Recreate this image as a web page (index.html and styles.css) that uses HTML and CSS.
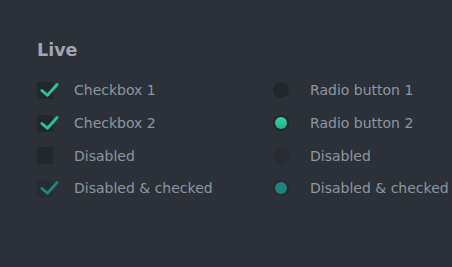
FILE: index.html
```html
<!DOCTYPE html>
<html lang="en">
<head>
  <meta charset="UTF-8">
  <title>Live controls</title>
  <link rel="stylesheet" href="styles.css">
</head>
<body>
  <div class="panel">
    <h2>Live</h2>
    <div class="grid">
      <!-- checkboxes -->
      <div class="col">
        <label class="row">
          <span class="box"><svg viewBox="0 0 24 20"><path d="M3 10 L9.5 15.5 L21 3"/></svg></span>
          Checkbox 1
        </label>
        <label class="row">
          <span class="box"><svg viewBox="0 0 24 20"><path d="M3 10 L9.5 15.5 L21 3"/></svg></span>
          Checkbox 2
        </label>
        <label class="row">
          <span class="box"></span>
          Disabled
        </label>
        <label class="row">
          <span class="box off"><svg viewBox="0 0 24 20"><path d="M3 10 L9.5 15.5 L21 3"/></svg></span>
          Disabled &amp; checked
        </label>
      </div>
      <!-- radios -->
      <div class="col">
        <label class="row">
          <span class="radio"></span>
          Radio button 1
        </label>
        <label class="row">
          <span class="radio"><i class="dot"></i></span>
          Radio button 2
        </label>
        <label class="row">
          <span class="radio off"></span>
          Disabled
        </label>
        <label class="row">
          <span class="radio off"><i class="dot"></i></span>
          Disabled &amp; checked
        </label>
      </div>
    </div>
  </div>
</body>
</html>
```

FILE: styles.css
```css
body { margin:0; background:#2b3039; font-family:'DejaVu Sans', 'Noto Sans', sans-serif; }
.panel { padding:40px 0 0 37px; }
h2 { margin:0 0 13px 0; font-size:17.5px; font-weight:700; color:#a0a7b0; line-height:21px; }
.grid { display:grid; grid-template-columns:236px 1fr; }
.row { display:flex; align-items:center; height:32.7px; font-size:14px; color:#8d97a2; gap:21px; }
.box { position:relative; width:16px; height:17px; background:#22262d; border-radius:1px; flex:none; }
.box svg { position:absolute; left:2px; top:0; width:21px; height:17px; overflow:visible; }
.box path { fill:none; stroke:#2cc497; stroke-width:3.4; stroke-linecap:round; stroke-linejoin:round; }
.box.off { background:#272b33; }
.box.off path { stroke:#1f8580; }
.radio { width:16px; height:16px; border-radius:50%; background:#22262d; display:flex; align-items:center; justify-content:center; flex:none; }
.radio.off { background:#272b33; }
.dot { width:12px; height:12px; border-radius:50%; background:linear-gradient(#35d3a3, #1fb087); }
.radio.off .dot { background:#1e817d; }
```
